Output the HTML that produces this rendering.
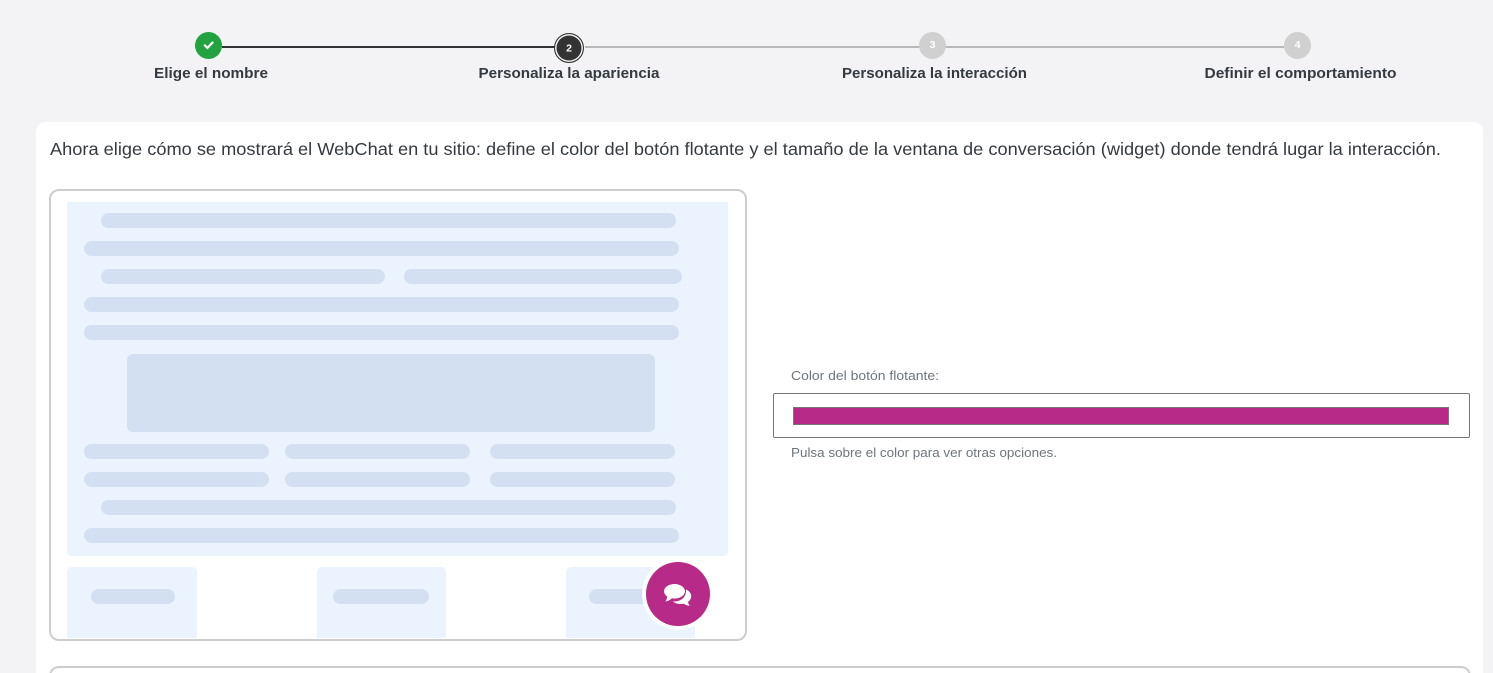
<!DOCTYPE html>
<html lang="es">
<head>
<meta charset="utf-8">
<title>WebChat</title>
<style>
html,body{margin:0;padding:0;width:1493px;height:673px;overflow:hidden;background:#f3f3f6;font-family:"Liberation Sans",sans-serif}
#root{position:relative;width:1493px;height:673px;overflow:hidden;background:#f3f3f6}
.a{position:absolute;box-sizing:border-box}
.bar{position:absolute;height:15px;background:#d3e0f1;border-radius:8px}
.box{position:absolute;background:#ebf3fe}
.n{position:absolute;border-radius:50%;box-sizing:border-box;text-align:center;color:#fff;font-weight:bold;font-size:10px}
svg{position:absolute;left:0;top:0}
</style>
</head>
<body>
<div id="root">
<div class="a" style="left:36px;top:122px;width:1447px;height:551px;background:#fff;border-radius:9px 9px 0 0"></div>

<div class="a" style="left:222px;top:46px;width:333px;height:2px;background:#333"></div>
<div class="a" style="left:585px;top:46px;width:699px;height:2px;background:#b9b9b9"></div>

<div class="n" style="left:195px;top:32px;width:27px;height:27px;background:#22a33f"></div>
<div class="n" style="left:554px;top:33px;width:30px;height:30px;background:#333;border:1px solid #333;box-shadow:inset 0 0 0 1.5px #f3f3f6"></div>
<div class="n" style="left:919px;top:32px;width:27px;height:27px;background:#d0d0d0"></div>
<div class="n" style="left:1284px;top:32px;width:27px;height:27px;background:#d0d0d0"></div>

<div class="a" style="left:49px;top:189px;width:698px;height:452px;border:2px solid #cdcdcf;border-radius:10px"></div>
<div class="box" style="left:67px;top:202px;width:661px;height:354px;border-radius:0 0 4px 4px"></div>

<div class="bar" style="left:101px;top:213px;width:575px"></div>
<div class="bar" style="left:84px;top:241px;width:595px"></div>
<div class="bar" style="left:101px;top:269px;width:284px"></div>
<div class="bar" style="left:404px;top:269px;width:278px"></div>
<div class="bar" style="left:84px;top:297px;width:595px"></div>
<div class="bar" style="left:84px;top:325px;width:595px"></div>
<div class="a" style="left:127px;top:354px;width:528px;height:78px;background:#d3e0f1;border-radius:6px"></div>
<div class="bar" style="left:84px;top:444px;width:185px"></div>
<div class="bar" style="left:285px;top:444px;width:185px"></div>
<div class="bar" style="left:490px;top:444px;width:185px"></div>
<div class="bar" style="left:84px;top:472px;width:185px"></div>
<div class="bar" style="left:285px;top:472px;width:185px"></div>
<div class="bar" style="left:490px;top:472px;width:185px"></div>
<div class="bar" style="left:101px;top:500px;width:575px"></div>
<div class="bar" style="left:84px;top:528px;width:595px"></div>

<div class="box" style="left:67px;top:567px;width:130px;height:71px;border-radius:5px 5px 0 0"></div>
<div class="box" style="left:317px;top:567px;width:129px;height:71px;border-radius:5px 5px 0 0"></div>
<div class="box" style="left:566px;top:567px;width:129px;height:71px;border-radius:5px 5px 0 0"></div>
<div class="bar" style="left:91px;top:589px;width:84px"></div>
<div class="bar" style="left:333px;top:589px;width:96px"></div>
<div class="bar" style="left:589px;top:589px;width:70px"></div>

<div class="a" style="left:642px;top:558px;width:72px;height:72px;border-radius:50%;background:#fff"></div>
<div class="a" style="left:646px;top:562px;width:64px;height:64px;border-radius:50%;background:#b72a88"></div>

<div class="a" style="left:773px;top:393px;width:697px;height:45px;border:1px solid #767676;border-radius:2px"></div>
<div class="a" style="left:793px;top:407px;width:656px;height:18px;background:#b72a88;border:1px solid #767676"></div>

<div class="a" style="left:49px;top:666px;width:1422px;height:40px;border:2px solid #cdcdcf;border-radius:10px"></div>

<svg width="1493" height="673" viewBox="0 0 1493 673" xmlns="http://www.w3.org/2000/svg" font-family="'Liberation Sans',sans-serif">
  <path d="M204.200 44.700l3.200 3.200 5.800-6" fill="none" stroke="#fff" stroke-width="2.200"/>
  <text x="569" y="51.500" font-size="10.500" font-weight="bold" fill="#fff" text-anchor="middle">2</text>
  <text x="932.500" y="48" font-size="10.500" font-weight="bold" fill="#fff" text-anchor="middle">3</text>
  <text x="1297.500" y="48" font-size="10.500" font-weight="bold" fill="#fff" text-anchor="middle">4</text>

  <g font-size="14.500" font-weight="bold" fill="#343a40">
    <text x="154" y="78" textLength="114" lengthAdjust="spacingAndGlyphs">Elige el nombre</text>
    <text x="478.500" y="78" textLength="181" lengthAdjust="spacingAndGlyphs">Personaliza la apariencia</text>
    <text x="842" y="78" textLength="185" lengthAdjust="spacingAndGlyphs">Personaliza la interacción</text>
    <text x="1204.500" y="78" textLength="192" lengthAdjust="spacingAndGlyphs">Definir el comportamiento</text>
  </g>

  <text x="50" y="155" font-size="17.500" fill="#343a40" textLength="1391" lengthAdjust="spacingAndGlyphs">Ahora elige cómo se mostrará el WebChat en tu sitio: define el color del botón flotante y el tamaño de la ventana de conversación (widget) donde tendrá lugar la interacción.</text>

  <text x="791" y="380" font-size="13" fill="#6c757d" textLength="148" lengthAdjust="spacingAndGlyphs">Color del botón flotante:</text>
  <text x="791" y="457" font-size="13" fill="#6c757d" textLength="266" lengthAdjust="spacingAndGlyphs">Pulsa sobre el color para ver otras opciones.</text>

  <path d="M686 589.500c3.200 1.300 5.200 3.800 5.200 6.700 0 2.300-1.200 4.300-3.200 5.700.2 1.500.9 2.800 1.800 3.900-2.400-.2-4.400-1-6-2.100-1 .2-2 .3-3 .3-3.200 0-6-.9-8-2.500 6.800.4 13.800-3.200 13.200-12z" fill="#fff"/>
  <path d="M674.500 584c-5.800 0-10.500 3.300-10.500 7.300 0 2 1.200 3.900 3.200 5.200-.3 1.900-.8 3.700-1.800 5.100 2.700-.4 4.900-1.800 6.500-3.300.8.200 1.700.3 2.600.3 5.800 0 10.500-3.300 10.500-7.300s-4.700-7.300-10.500-7.300z" fill="#fff"/>
</svg>
</div>
</body>
</html>
